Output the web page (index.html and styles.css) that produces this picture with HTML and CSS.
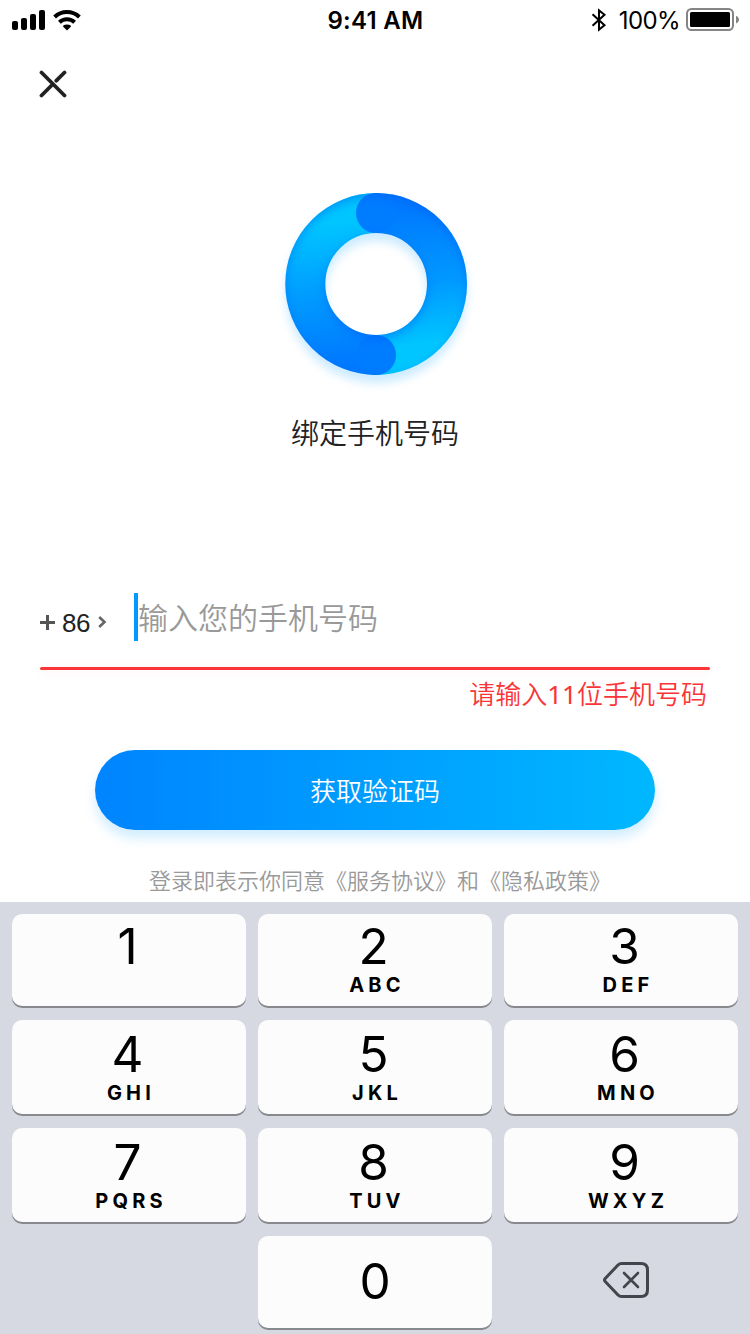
FILE: index.html
```html
<!DOCTYPE html>
<html lang="zh-CN">
<head>
<meta charset="utf-8">
<title>绑定手机号码</title>
<link rel="stylesheet" href="styles.css">
</head>
<body>
<div class="screen">
  <header class="status">
    <svg class="signal" width="72" height="24" viewBox="0 0 72 24">
      <rect x="0" y="13" width="6" height="9" rx="2"/>
      <rect x="9" y="10" width="6" height="12" rx="2"/>
      <rect x="18" y="6" width="6" height="16" rx="2"/>
      <rect x="27" y="2" width="6" height="20" rx="2"/>
      <g fill="none" stroke="#000" stroke-width="4">
        <path d="M42.600 9a18 18 0 0 1 24.800 0"/>
        <path d="M47.400 14.200a11 11 0 0 1 15.200 0"/>
      </g>
      <path d="M51 18.500Q51 16.400 55 16.400T59 18.500L55 22.400z"/>
    </svg>
    <span class="time">9:41 AM</span>
    <div class="power">
      <svg class="bluetooth" width="16" height="24" viewBox="0 0 16 24" fill="none" stroke="#000" stroke-width="2"><path d="M1.500 6.300 13.500 17.200 8 21.600V2.400L13.500 6.800 1.500 17.700"/></svg>
      <span class="percent">100%</span>
      <svg class="battery" width="54" height="24" viewBox="0 0 54 24">
        <rect x="1" y="1" width="46" height="21" rx="4.5" fill="none" stroke="#858585" stroke-width="2"/>
        <rect x="4" y="4" width="40" height="15" rx="1.5"/>
        <path d="M50 7.8c4 1.7 4 6 0 7.7z" fill="#858585"/>
      </svg>
    </div>
  </header>

  <button class="close" aria-label="关闭">
    <svg width="28" height="28" viewBox="0 0 28 28" fill="none" stroke="#222" stroke-width="3.8" stroke-linecap="round"><path d="M2.500 2.500 25.500 25.500M2.500 25.500 13 15M17.300 10.700 25.500 2.500"/></svg>
  </button>

  <svg class="logo" width="222" height="222" viewBox="0 0 222 222" fill="none">
    <defs>
      <linearGradient id="right" gradientUnits="userSpaceOnUse" x1="105" y1="40" x2="125" y2="192"><stop offset="0" stop-color="#007aff"/><stop offset=".5" stop-color="#0099ff"/><stop offset=".9" stop-color="#00c6ff"/></linearGradient>
      <linearGradient id="left" gradientUnits="userSpaceOnUse" x1="117" y1="182" x2="97" y2="30"><stop offset="0" stop-color="#007aff"/><stop offset=".5" stop-color="#00a0ff"/><stop offset=".9" stop-color="#00c6ff"/></linearGradient>
      <filter id="depth" x="-20%" y="-20%" width="140%" height="140%" color-interpolation-filters="sRGB">
        <feComponentTransfer in="SourceAlpha" result="outside"><feFuncA type="linear" slope="-1" intercept="1"/></feComponentTransfer>
        <feGaussianBlur in="outside" stdDeviation="5"/>
        <feOffset dy="4" result="soft"/>
        <feFlood flood-color="#0058f0" flood-opacity=".42"/>
        <feComposite in2="soft" operator="in"/>
        <feComposite in2="SourceAlpha" operator="in" result="inner"/>
        <feGaussianBlur in="SourceAlpha" stdDeviation="5"/>
        <feOffset dy="8" result="drop"/>
        <feFlood flood-color="#0099ff" flood-opacity=".2"/>
        <feComposite in2="drop" operator="in" result="shadow"/>
        <feMerge><feMergeNode in="shadow"/><feMergeNode in="SourceGraphic"/><feMergeNode in="inner"/></feMerge>
      </filter>
    </defs>
    <g filter="url(#depth)">
      <path d="M111 40a71 71 0 0 1 0 142" stroke="url(#right)" stroke-width="40"/>
      <path d="M111.3 182a71 71 0 0 1 0-142" stroke="url(#left)" stroke-width="40"/>
      <circle cx="111" cy="40" r="20" fill="#007cff"/>
      <circle cx="111" cy="182" r="20" fill="#007cff"/>
    </g>
  </svg>

  <h1 class="title">绑定手机号码</h1>

  <div class="phone">
    <div class="country">
      <svg width="15" height="15" viewBox="0 0 15 15" stroke="#555" stroke-width="3"><path d="M0 7.5H15M7.5 0V15"/></svg>
      <span class="code">86</span>
      <svg width="9" height="14" viewBox="0 0 9 14" fill="none" stroke="#666" stroke-width="2.6"><path d="M1.2 2 6.500 7 1.2 12"/></svg>
    </div>
    <span class="caret"></span>
    <span class="placeholder">输入您的手机号码</span>
  </div>
  <div class="underline"></div>
  <p class="error">请输入<span class="count">11</span>位手机号码</p>

  <button class="submit">获取验证码</button>
  <p class="terms">登录即表示你同意《服务协议》和《隐私政策》</p>

  <div class="keyboard">
    <div class="key"><span class="digit">1</span></div>
    <div class="key"><span class="digit">2</span><span class="letters">ABC</span></div>
    <div class="key right"><span class="digit">3</span><span class="letters">DEF</span></div>
    <div class="key tall"><span class="digit">4</span><span class="letters">GHI</span></div>
    <div class="key tall"><span class="digit">5</span><span class="letters">JKL</span></div>
    <div class="key tall right"><span class="digit">6</span><span class="letters">MNO</span></div>
    <div class="key tall"><span class="digit">7</span><span class="letters">PQRS</span></div>
    <div class="key tall"><span class="digit">8</span><span class="letters">TUV</span></div>
    <div class="key tall right"><span class="digit">9</span><span class="letters">WXYZ</span></div>
    <div class="key zero"><span class="digit">0</span></div>
    <div class="backspace">
      <svg width="48" height="38" viewBox="0 0 48 38" fill="none" stroke="#43454d" stroke-width="3" stroke-linejoin="round" stroke-linecap="round"><path d="M19.5 2.5H39Q45.500 2.5 45.500 9V29Q45.500 35.500 39 35.500H19.500Q17.500 35.500 16 34L3.200 20.500Q1.800 19 3.200 17.500L16 4Q17.500 2.500 19.500 2.500Z"/><path stroke-width="2.600" d="M22 12 36 26M36 12 22 26"/></svg>
    </div>
  </div>
</div>
</body>
</html>
```
FILE: styles.css
```css
* { box-sizing: border-box; }
body { margin: 0; background: #fff; }
button { border: 0; padding: 0; background: none; }
svg { display: block; flex: none; }

.screen {
  width: 750px;
  height: 1334px;
  overflow: hidden;
  display: flex;
  flex-direction: column;
  color: #222;
  font-family: Inter, "Noto Sans CJK SC", sans-serif;
}

.status {
  height: 40px;
  padding: 0 10px 0 12px;
  display: grid;
  grid-template-columns: 1fr auto 1fr;
  align-items: center;
  color: #000;
}
.signal { margin-top: -2px; }
.time { padding-top: 1px; margin-right: 1px; font-size: 24px; font-weight: 600; letter-spacing: .3px; line-height: 40px; }
.power { display: flex; justify-content: flex-end; align-items: center; }
.bluetooth { margin-top: -2px; }
.percent { margin: 0 6px 0 12px; padding-top: 1px; font-size: 24px; letter-spacing: -.6px; line-height: 40px; }
.battery { margin-top: -1px; }

.close { width: 28px; height: 28px; margin: 30px 0 0 39px; }
.logo { margin: 75px 0 0 265px; }

.title {
  margin: 15px 0 0;
  height: 44px;
  font: 350 28px/44px "Noto Sans CJK SC", sans-serif;
  text-align: center;
}

.phone {
  height: 48px;
  margin: 139px 40px 0;
  display: flex;
  align-items: center;
}
.country { width: 94px; display: flex; align-items: center; padding-top: 10px; }
.code { margin: 2px 8px 0 7px; font: 26px/30px "Liberation Sans", sans-serif; letter-spacing: -.4px; }
.caret { width: 4px; height: 48px; background: #0099ff; }
.placeholder { margin-top: -2px; color: #999; font: 350 30px/48px "Noto Sans CJK SC", sans-serif; }

.underline {
  height: 3px;
  margin: 26px 40px 0;
  border-radius: 2px;
  background: #fb3437;
  box-shadow: 0 0 12px rgba(251, 52, 55, .12);
}
.error {
  margin: 3px 43px 0;
  height: 40px;
  color: #fb3437;
  font: 350 26px/40px "Noto Sans CJK SC", sans-serif;
  text-align: right;
}
.count { font-family: "Noto Sans", sans-serif; font-weight: 400; }

.submit {
  width: 560px;
  height: 80px;
  margin: 37px auto 0;
  border-radius: 40px;
  color: #fff;
  background: linear-gradient(90deg, #0084ff, #00b8ff);
  box-shadow: 0 8px 12px rgba(0, 153, 255, .18);
  font: 350 26px/78px "Noto Sans CJK SC", sans-serif;
}
.terms {
  margin: 33px 0 0;
  padding-left: 10px;
  height: 32px;
  color: #999;
  font: 350 22px/32px "Noto Sans CJK SC", sans-serif;
  text-align: center;
}

.keyboard {
  height: 432px;
  margin-top: 7px;
  padding: 12px;
  display: grid;
  grid-template-columns: repeat(3, 234px);
  grid-template-rows: 92px 94px 94px 92px;
  gap: 14px 12px;
  background: #d6d9e1;
  color: #000;
}
.key {
  display: flex;
  flex-direction: column;
  align-items: center;
  padding-top: 7px;
  border-radius: 10px;
  background: #fcfcfc;
  box-shadow: 0 2px 0 #87898d;
}
.key.tall { padding-top: 9px; }
.key.right { padding-left: 10px; }
.digit { font-size: 49.500px; line-height: 50px; margin-right: 3px; }
.letters { margin: 2px 0 0 4px; font-size: 20px; line-height: 24px; font-weight: 700; letter-spacing: 4.2px; }
.key.zero { grid-column: 2; padding-top: 20px; }
.zero .digit { margin-right: 0; }
.backspace { display: flex; justify-content: center; padding: 25px 0 0 10px; }
```
